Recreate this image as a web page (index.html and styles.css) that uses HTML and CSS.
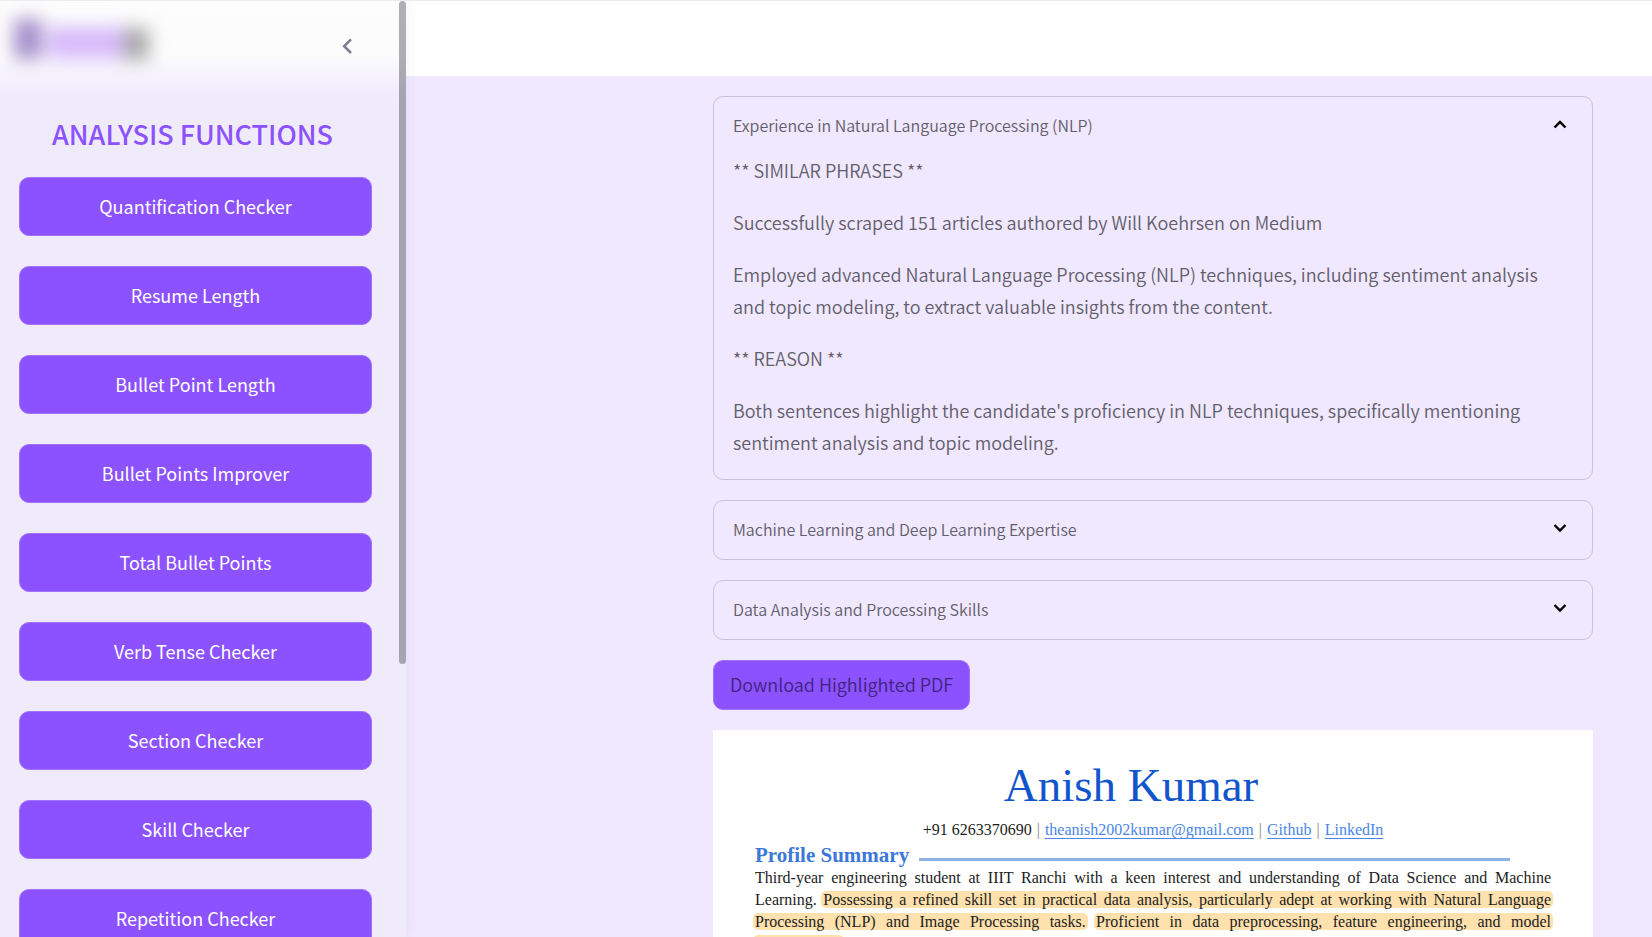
FILE: index.html
```html
<!DOCTYPE html>
<html lang="en">
<head>
<meta charset="utf-8">
<meta name="viewport" content="width=device-width, initial-scale=1">
<title>Analysis Functions</title>
<link rel="stylesheet" href="styles.css">
</head>
<body>
<div class="app">
  <aside class="sidebar">
    <div class="sidebar-top">
      <svg class="logo" width="180" height="90" viewBox="0 0 180 90" aria-hidden="true">
        <defs><filter id="soft" filterUnits="userSpaceOnUse" x="-40" y="-40" width="260" height="180" color-interpolation-filters="sRGB"><feGaussianBlur stdDeviation="9"/></filter></defs>
        <g filter="url(#soft)">
          <rect x="14" y="18" width="28" height="40" fill="#a38fcb"/>
          <rect x="48" y="26" width="76" height="32" fill="#d6bafa"/>
          <rect x="124" y="27" width="25" height="32" fill="#a8a8a8"/>
        </g>
      </svg>
      <button class="collapse" type="button" aria-label="Collapse sidebar">
        <svg width="24" height="24" viewBox="0 0 24 24" fill="none" stroke="#7d7e92" stroke-width="2.6"><path d="M16 5.400L9.200 12.200L16 19"/></svg>
      </button>
    </div>
    <h2 class="sidebar-title">ANALYSIS FUNCTIONS</h2>
    <nav class="functions" aria-label="Analysis functions">
      <button class="btn" type="button">Quantification Checker</button>
      <button class="btn" type="button">Resume Length</button>
      <button class="btn" type="button">Bullet Point Length</button>
      <button class="btn" type="button">Bullet Points Improver</button>
      <button class="btn" type="button">Total Bullet Points</button>
      <button class="btn" type="button">Verb Tense Checker</button>
      <button class="btn" type="button">Section Checker</button>
      <button class="btn" type="button">Skill Checker</button>
      <button class="btn" type="button">Repetition Checker</button>
    </nav>
    <div class="scroll-thumb"></div>
  </aside>
  <div class="page">
    <header class="topbar"></header>
    <main class="content">
      <div class="column">
        <section class="expander">
          <button class="expander-head" type="button" aria-expanded="true">Experience in Natural Language Processing (NLP)
            <svg class="chevron" width="24" height="24" viewBox="0 0 24 24"><path d="M6.500 14.500L12 9L17.500 14.500"/></svg>
          </button>
          <div class="expander-body">
            <p>** SIMILAR PHRASES **</p>
            <p>Successfully scraped 151 articles authored by Will Koehrsen on Medium</p>
            <p>Employed advanced Natural Language Processing (NLP) techniques, including sentiment analysis and topic modeling, to extract valuable insights from the content.</p>
            <p>** REASON **</p>
            <p>Both sentences highlight the candidate's proficiency in NLP techniques, specifically mentioning sentiment analysis and topic modeling.</p>
          </div>
        </section>
        <section class="expander">
          <button class="expander-head" type="button" aria-expanded="false">Machine Learning and Deep Learning Expertise
            <svg class="chevron" width="24" height="24" viewBox="0 0 24 24"><path d="M6.500 8L12 13.500L17.500 8"/></svg>
          </button>
        </section>
        <section class="expander">
          <button class="expander-head" type="button" aria-expanded="false">Data Analysis and Processing Skills
            <svg class="chevron" width="24" height="24" viewBox="0 0 24 24"><path d="M6.500 8L12 13.500L17.500 8"/></svg>
          </button>
        </section>
        <button class="btn download" type="button">Download Highlighted PDF</button>
        <article class="resume">
          <h1 class="resume-name">Anish Kumar</h1>
          <p class="resume-contact">+91 6263370690 <i>|</i> <a href="#">theanish2002kumar@gmail.com</a> <i>|</i> <a href="#">Github</a> <i>|</i> <a href="#">LinkedIn</a></p>
          <h2 class="resume-heading">Profile Summary</h2>
          <p class="resume-text">Third-year engineering student at IIIT Ranchi with a keen interest and understanding of Data Science and Machine Learning. <mark>Possessing a refined skill set in practical data analysis, particularly adept at working with Natural Language Processing (NLP) and Image Processing tasks.</mark> <mark>Proficient in data preprocessing, feature engineering, and model development.</mark></p>
        </article>
      </div>
    </main>
  </div>
</div>
</body>
</html>
```
FILE: styles.css
```css
* {
  box-sizing: border-box;
}

body {
  margin: 0;
  background: #f0e8fe;
  color: #625e6c;
  font-family: "Noto Sans CJK SC", "Noto Sans", sans-serif;
  font-size: 18px;
  font-weight: 350;
  line-height: 32px;
}

h1, h2, p {
  margin: 0;
}

button {
  font: inherit;
  color: inherit;
  cursor: pointer;
}

.app {
  display: flex;
  height: 100vh;
  overflow: hidden;
  border-top: 1px solid #ebebee;
}

.sidebar {
  position: relative;
  z-index: 1;
  flex: 0 0 406px;
  overflow: hidden;
  padding: 0 34px 0 19px;
  background: linear-gradient(#fdfdfd 0, #fcfcfd 54px, #f1ecfc 90px, #f0ebfb 106px);
  box-shadow: 0 0 12px rgba(90, 60, 140, 0.08);
}

.sidebar-top {
  display: flex;
  align-items: center;
  justify-content: space-between;
  height: 90px;
  margin-left: -19px;
}

.logo {
  align-self: flex-start;
}

.collapse {
  display: flex;
  margin-right: 13px;
  padding: 0;
  border: 0;
  background: none;
}

.sidebar-title {
  margin: 24px 0;
  padding-right: 6px;
  color: #8c52ff;
  font-size: 27px;
  font-weight: 500;
  line-height: 38px;
  text-align: center;
}

.functions {
  display: flex;
  flex-direction: column;
  gap: 30px;
}

.btn {
  flex: none;
  height: 59px;
  padding: 0 16px 2px;
  border: 1px solid #a173fb;
  border-radius: 10px;
  background: #8c52ff;
  color: #fff;
  font-weight: 400;
}

.scroll-thumb {
  position: absolute;
  top: 0;
  right: 0;
  width: 7px;
  height: 71%;
  max-height: 663px;
  border-radius: 4px;
  background: rgba(80, 80, 92, 0.46);
}

.page {
  flex: 1;
  min-width: 0;
}

.topbar {
  height: 75px;
  background: #fff;
}

.content {
  display: grid;
  grid-template-columns: 228fr 880fr;
  column-gap: 20px;
  padding: 20px 59px;
}

.column {
  grid-column: 2;
  display: flex;
  flex-direction: column;
  gap: 20px;
  min-width: 0;
}

.expander {
  min-height: 60px;
  border: 1px solid #cbc1da;
  border-radius: 10px;
}

.expander-head {
  display: flex;
  align-items: center;
  justify-content: space-between;
  width: 100%;
  height: 57px;
  padding: 0 20px 1px 19px;
  border: 0;
  background: none;
  font-size: 16px;
  text-align: left;
}

.chevron {
  fill: none;
  stroke: #000;
  stroke-width: 2.4;
}

.expander-body {
  display: flex;
  flex-direction: column;
  gap: 20px;
  padding: 0 19px 21px;
}

.download {
  align-self: flex-start;
  height: 50px;
  color: #3f2380;
  font-weight: 350;
}

.resume {
  padding: 25px 42px;
  background: #fff;
  color: #1c1c1c;
  font-family: "Liberation Serif", serif;
  font-size: 16px;
  font-weight: 400;
}

.resume-name {
  padding-right: 44px;
  color: #1155cc;
  font-size: 47px;
  font-weight: 400;
  line-height: 60px;
  text-align: center;
}

.resume-contact {
  line-height: 29px;
  text-align: center;
}

.resume-contact a {
  color: #4a86e8;
  text-underline-offset: 3px;
}

.resume-contact i {
  margin: 0 1px;
  color: #888;
  font-style: normal;
}

.resume-heading {
  display: flex;
  align-items: center;
  gap: 10px;
  padding-right: 41px;
  color: #3c78d8;
  font-size: 21px;
  line-height: 22px;
}

.resume-heading::after {
  content: "";
  flex: 1;
  height: 3px;
  margin-top: 8px;
  background: #8fb3e6;
}

.resume-text {
  margin-top: 1px;
  line-height: 22px;
  text-align: justify;
}

.resume-text mark {
  margin: 0 -2px;
  padding: 0 2px;
  border-radius: 5px;
  background: #ffe1ae;
  color: inherit;
  -webkit-box-decoration-break: clone;
  box-decoration-break: clone;
}
```
